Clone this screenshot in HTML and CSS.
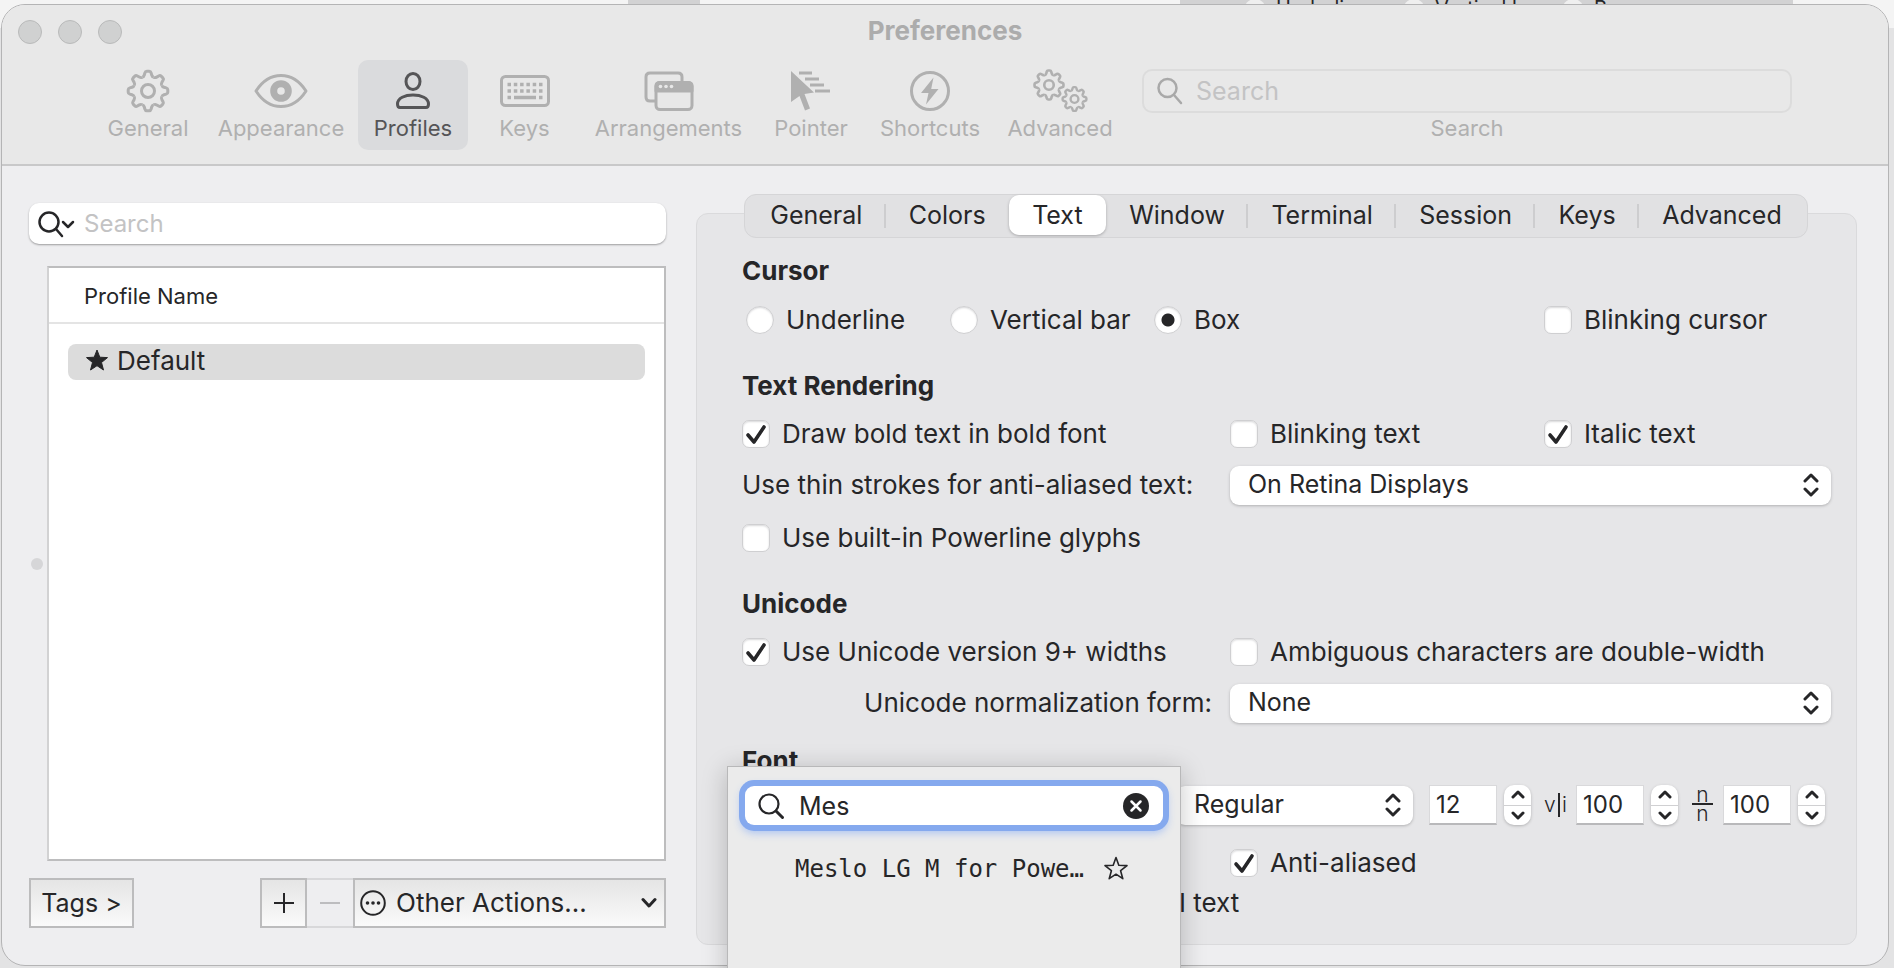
FILE: index.html
```html
<!DOCTYPE html>
<html lang="en">
<head>
<meta charset="utf-8">
<title>Preferences</title>
<link rel="stylesheet" href="styles.css">
</head>
<body>
<svg class="defs" width="0" height="0" aria-hidden="true">
  <defs>
    <path id="tooth" d="M-5.74-13.86Q-4.2-14.2-3.7-16L-3.1-18.2Q-2.7-19.8-1.2-19.8H1.2Q2.7-19.8 3.1-18.2L3.7-16Q4.2-14.2 5.74-13.86"/>
    <g id="gear">
      <use href="#tooth"/><use href="#tooth" transform="rotate(45)"/><use href="#tooth" transform="rotate(90)"/><use href="#tooth" transform="rotate(135)"/>
      <use href="#tooth" transform="rotate(180)"/><use href="#tooth" transform="rotate(225)"/><use href="#tooth" transform="rotate(270)"/><use href="#tooth" transform="rotate(315)"/>
      <circle r="6.5"/>
    </g>
    <g id="updown" fill="none" stroke="#262628" stroke-width="3" stroke-linecap="round" stroke-linejoin="round">
      <path d="M2 8l6-6 6 6M2 16l6 6 6-6"/>
    </g>
  </defs>
</svg>

<div class="behind" aria-hidden="true">
  <div class="behind-a"></div>
  <div class="behind-b"><i></i><span>Underline</span><i></i><span>Vertical bar</span><i></i><span>Box</span></div>
</div>

<main class="window">
  <header class="titlebar">
    <div class="title-row">
      <div class="lights"><button aria-label="Close"></button><button aria-label="Minimize"></button><button aria-label="Zoom"></button></div>
      <h1>Preferences</h1>
    </div>
    <nav class="toolbar">
      <button class="tool"><svg class="line" width="48" height="48" viewBox="-24 -24 48 48"><use href="#gear"/></svg>General</button>
      <button class="tool"><svg class="line" width="56" height="48" viewBox="-28 -24 56 48"><path d="M-25 0Q-15-15.500 0-15.500T25 0Q15 15.500 0 15.500T-25 0Z"/><circle r="7.300" stroke-width="7"/></svg>Appearance</button>
      <button class="tool active"><svg class="line" width="48" height="48" viewBox="-24 -24 48 48"><ellipse cy="-9.500" rx="7" ry="8"/><path d="M-15.500 13C-15.500 7-8 4 0 4S15.500 7 15.500 13Q15.500 16.500 13 16.500H-13Q-15.500 16.500-15.500 13Z"/></svg>Profiles</button>
      <button class="tool"><svg class="line" width="52" height="48" viewBox="-26 -24 52 48"><rect x="-23.500" y="-14.500" width="47" height="29" rx="4"/><path d="M-17.500-6.500H18M-17.500 0H18" stroke-width="3.500" stroke-dasharray="3.500 2.800"/><path d="M-17.500 6.500h3.500M-11 6.500H11M14 6.500h3.500" stroke-width="3.500" stroke-linecap="butt"/></svg>Keys</button>
      <button class="tool"><svg class="line" width="52" height="48" viewBox="-26 -24 52 48"><path d="M-14 10H-19Q-23 10-23 6V-14Q-23-18-19-18H9Q13-18 13-14V-10"/><rect x="-13" y="-8.500" width="36" height="27" rx="4"/><path d="M-13 0V-5Q-13-8.500-9-8.500H19Q23-8.500 23-5V0Z" class="solid"/><g fill="#e8e8e8" stroke="none"><circle cx="-8.500" cy="-4.500" r="1.800"/><circle cx="-3" cy="-4.500" r="1.800"/><circle cx="2.500" cy="-4.500" r="1.800"/></g></svg>Arrangements</button>
      <button class="tool"><svg class="line" width="44" height="48" viewBox="-22 -24 44 48"><path class="fill" d="M-20-20L3 1.500L-6.500 3L-1 17.500L-6 19.500L-11.500 5L-20 11Z"/><path d="M-12-18H1M-6-12H8M-1-6H13M4 0H19"/></svg>Pointer</button>
      <button class="tool"><svg class="line" width="48" height="48" viewBox="-24 -24 48 48"><circle r="18.500"/><path class="fill" d="M3.500-13.500L-9 2H-1.500L-4 13.500L8.500-2H1.200Z"/></svg>Shortcuts</button>
      <button class="tool"><svg class="line" width="56" height="48" viewBox="-28 -24 56 48"><g transform="translate(-11 -6) scale(.73)" stroke-width="3.600"><use href="#gear"/></g><g transform="translate(14.500 8) scale(.6)" stroke-width="4"><use href="#gear"/></g></svg>Advanced</button>
      <label class="tool-search">
        <span class="tool-field"><svg width="28" height="28" viewBox="0 0 28 28" fill="none" stroke="#a9a9a9" stroke-width="2.500" stroke-linecap="round"><circle cx="11.500" cy="11" r="9"/><path d="M18 18l7 8"/></svg><input type="search" placeholder="Search"></span>
        Search
      </label>
    </nav>
  </header>

  <div class="body">
    <section class="sidebar">
      <label class="side-search"><svg width="40" height="28" viewBox="0 0 40 28" fill="none" stroke="#262628" stroke-width="2.500" stroke-linecap="round" stroke-linejoin="round"><circle cx="12" cy="12" r="9.500"/><path d="M19 19l6 7M26 12l5 5 5-5"/></svg><input type="search" placeholder="Search" aria-label="Search profiles"></label>
      <div class="list-row">
        <span class="grip"></span>
        <table class="profiles">
          <thead><tr><th>Profile Name</th></tr></thead>
          <tbody><tr><td><div class="profile"><svg width="24" height="24" viewBox="-12 -12 24 24"><path fill="#262628" stroke="#262628" stroke-linejoin="round" d="M0-11L2.800-3.800L10.500-3.400L4.500 1.500L6.500 9L0 4.700L-6.500 9L-4.500 1.500L-10.500-3.400L-2.800-3.800Z"/></svg>Default</div></td></tr></tbody>
        </table>
      </div>
      <div class="side-actions">
        <button class="bevel tags">Tags &gt;</button>
        <div class="group">
          <button class="bevel plus" aria-label="Add profile"><svg width="22" height="22" viewBox="0 0 22 22"><path d="M11 1v20M1 11h20" stroke="#262628" stroke-width="2"/></svg></button>
          <button class="bevel minus" aria-label="Remove profile" disabled><svg width="22" height="22" viewBox="0 0 22 22"><path d="M1 11h20" stroke="#bdbdbf" stroke-width="2"/></svg></button>
          <button class="bevel other"><svg width="26" height="26" viewBox="-13 -13 26 26"><circle r="11.800" fill="none" stroke="#262628" stroke-width="2"/><g fill="#262628"><circle cx="-5.500" r="1.800"/><circle r="1.800"/><circle cx="5.500" r="1.800"/></g></svg><span>Other Actions...</span><svg width="16" height="12" viewBox="0 0 16 12"><path d="M2 2.500l6 6.500 6-6.500" fill="none" stroke="#262628" stroke-width="3" stroke-linecap="round" stroke-linejoin="round"/></svg></button>
        </div>
      </div>
    </section>

    <section class="panel">
      <nav class="tabs">
        <button class="tab sep">General</button><button class="tab">Colors</button><button class="tab selected">Text</button><button class="tab sep">Window</button><button class="tab sep">Terminal</button><button class="tab sep">Session</button><button class="tab sep">Keys</button><button class="tab">Advanced</button>
      </nav>

      <div class="form">
        <h2>Cursor</h2>
        <div class="row tall">
          <div class="radios">
            <label class="choice"><input type="radio" name="cursor">Underline</label>
            <label class="choice"><input type="radio" name="cursor">Vertical bar</label>
            <label class="choice"><input type="radio" name="cursor" checked>Box</label>
          </div>
          <label class="choice third"><input type="checkbox">Blinking cursor</label>
        </div>

        <h2>Text Rendering</h2>
        <div class="row">
          <label class="choice"><input type="checkbox" checked>Draw bold text in bold font</label>
          <label class="choice"><input type="checkbox">Blinking text</label>
          <label class="choice"><input type="checkbox" checked>Italic text</label>
        </div>
        <div class="row short">
          <label for="thin">Use thin strokes for anti-aliased text:</label>
          <span class="popup wide"><select id="thin"><option>On Retina Displays</option></select><svg width="16" height="24"><use href="#updown"/></svg></span>
        </div>
        <div class="row tall">
          <label class="choice"><input type="checkbox">Use built-in Powerline glyphs</label>
        </div>

        <h2>Unicode</h2>
        <div class="row">
          <label class="choice"><input type="checkbox" checked>Use Unicode version 9+ widths</label>
          <label class="choice wide"><input type="checkbox">Ambiguous characters are double-width</label>
        </div>
        <div class="row short">
          <label for="norm" class="right">Unicode normalization form:</label>
          <span class="popup wide"><select id="norm"><option>None</option></select><svg width="16" height="24"><use href="#updown"/></svg></span>
        </div>

        <div class="font-area">
          <h2>Font</h2>
          <div class="font-row">
            <span class="popup"><select aria-label="Font style"><option>Regular</option></select><svg width="16" height="24"><use href="#updown"/></svg></span>
            <input class="num" type="text" value="12" aria-label="Size">
            <span class="stepper"><button aria-label="Increase size"><svg width="14" height="9"><path d="M2 7l5-5 5 5"/></svg></button><button aria-label="Decrease size"><svg width="14" height="9"><path d="M2 2l5 5 5-5"/></svg></button></span>
            <label class="vi" for="hsp">v<i></i>i</label>
            <input class="num" type="text" value="100" id="hsp">
            <span class="stepper"><button aria-label="Increase horizontal spacing"><svg width="14" height="9"><path d="M2 7l5-5 5 5"/></svg></button><button aria-label="Decrease horizontal spacing"><svg width="14" height="9"><path d="M2 2l5 5 5-5"/></svg></button></span>
            <label class="nn" for="vsp"><span>n</span><span>n</span></label>
            <input class="num" type="text" value="100" id="vsp">
            <span class="stepper"><button aria-label="Increase vertical spacing"><svg width="14" height="9"><path d="M2 7l5-5 5 5"/></svg></button><button aria-label="Decrease vertical spacing"><svg width="14" height="9"><path d="M2 2l5 5 5-5"/></svg></button></span>
          </div>
          <div class="row roomy">
            <label class="choice second"><input type="checkbox" checked>Anti-aliased</label>
          </div>
          <div class="tail">I text</div>

          <div class="popover">
            <label class="pop-field"><svg width="28" height="28" viewBox="0 0 28 28" fill="none" stroke="#262628" stroke-width="2.200" stroke-linecap="round"><circle cx="12" cy="12" r="9.500"/><path d="M19 19l6.500 6.500" stroke-width="3"/></svg><input type="text" value="Mes" aria-label="Search fonts"><button aria-label="Clear"><svg width="26" height="26" viewBox="-13 -13 26 26"><circle r="13" fill="#262628"/><path d="M-4.500-4.500l9 9M4.500-4.500l-9 9" stroke="#fff" stroke-width="2.500" stroke-linecap="round"/></svg></button></label>
            <div class="result"><span>Meslo LG M for Powe…</span><button aria-label="Favorite"><svg width="26" height="26" viewBox="-13 -13 26 26"><path fill="none" stroke="#262628" stroke-width="1.600" stroke-linejoin="round" d="M0-11.500L2.800-3.800L11-3.400L4.600 1.700L6.800 9.700L0 5.200L-6.800 9.700L-4.600 1.700L-11-3.400L-2.800-3.800Z"/></svg></button></div>
          </div>
        </div>
      </div>
    </section>
  </div>
</main>
</body>
</html>
```

FILE: styles.css
```css
* { box-sizing: border-box; }

body {
  position: relative;
  display: flow-root;
  margin: 0;
  height: 100vh;
  overflow: hidden;
  background: #e3e3e4;
  color: #262628;
  font: 26px/30px Inter, "Liberation Sans", sans-serif;
}

button, input, select { font: inherit; color: inherit; margin: 0; }
button { background: none; border: 0; padding: 0; }
h1, h2 { margin: 0; font-size: 26px; font-weight: 700; }
svg { display: block; flex: none; }
.defs { position: absolute; }

/* Slivers of the window underneath */
.behind {
  position: absolute;
  inset: 0 0 auto;
  height: 28px;
  background: #f4f4f4;
  overflow: hidden;
}
.behind-a, .behind-b { position: absolute; top: 0; height: 28px; background: #d2d2d3; }
.behind-a { left: 628px; width: 72px; }
.behind-b {
  left: 1180px;
  width: 613px;
  padding-left: 64px;
  display: flex;
  gap: 10px;
  font-size: 20px;
  line-height: 16px;
}
.behind-b i { width: 22px; height: 22px; border-radius: 50%; background: #efefef; margin-top: -1px; }
.behind-b span { width: 117px; white-space: nowrap; }

.window {
  position: relative;
  display: flex;
  flex-direction: column;
  height: calc(100vh - 6px);
  margin: 4px 5px 2px 1px;
  background: #eeeef0;
  border: 1px solid #b4b4b5;
  border-radius: 24px;
}

.titlebar {
  background: #e8e8e8;
  border-bottom: 2px solid #c8c8c9;
  border-radius: 23px 23px 0 0;
  height: 161px;
  flex: none;
  color: #b0b0b0;
}
.title-row {
  display: grid;
  grid-template-columns: 1fr auto 1fr;
  align-items: center;
  height: 54px;
  padding: 0 16px;
}
.title-row h1 { color: #acacac; padding-bottom: 2px; }
.lights { display: flex; gap: 16px; }
.lights button { width: 24px; height: 24px; border-radius: 50%; background: #d0d1d1; border: 1px solid #b9baba; }

.toolbar {
  display: grid;
  grid-template-columns: 112px 154px 110px 113px 175px 110px 128px 132px 1fr;
  padding: 1px 96px 0 90px;
  font-size: 22px;
  line-height: 26px;
}
.tool {
  display: flex;
  flex-direction: column;
  align-items: center;
  height: 90px;
  padding-top: 7px;
  border-radius: 10px;
}
.tool.active { background: #dadbdd; color: #555557; }
.line { fill: none; stroke: currentColor; stroke-width: 3; stroke-linejoin: round; }
.line .fill { fill: currentColor; stroke: none; }
.line .solid { fill: currentColor; }
.tool-search { display: flex; flex-direction: column; align-items: center; padding: 9px 0 0 16px; }
.tool-field {
  display: flex;
  align-items: center;
  gap: 12px;
  width: 100%;
  height: 44px;
  margin-bottom: 2px;
  padding: 0 12px;
  border: 2px solid #dcdcdc;
  border-radius: 10px;
}
input[type=search], .pop-field input {
  flex: 1;
  min-width: 0;
  border: 0;
  outline: 0;
  padding: 0;
  background: none;
  appearance: none;
}
.tool-field input, .pop-field input { font-size: 25px; }
input::placeholder { color: #c3c3c4; opacity: 1; }

.body { flex: 1; display: flex; gap: 30px; padding: 27px 31px 20px 27px; min-height: 0; }

.sidebar { flex: 0 0 637px; display: flex; flex-direction: column; padding-top: 10px; }
.side-search {
  display: flex;
  align-items: center;
  gap: 7px;
  height: 41px;
  padding: 0 8px;
  border-radius: 10px;
  background: #fff;
  box-shadow: 0 1px 2px #9c9c9e;
}
.side-search input { font-size: 24px; }
.list-row { flex: 1; display: flex; align-items: center; gap: 4px; margin-top: 22px; padding-left: 2px; min-height: 0; }
.grip { width: 12px; height: 12px; border-radius: 50%; background: #d6d6d8; }
.profiles { flex: 1; align-self: stretch; display: block; background: #fff; border: 2px solid #bdbdbe; border-left-color: #d2d2d3; border-spacing: 0; }
.profiles thead, .profiles tbody, .profiles tr, .profiles th, .profiles td { display: block; padding: 0; }
.profiles th {
  height: 56px;
  padding: 0 35px;
  border-bottom: 2px solid #e4e4e4;
  font-size: 22px;
  line-height: 56px;
  font-weight: 400;
  text-align: left;
}
.profiles td { padding: 20px 19px; }
.profile { display: flex; align-items: center; gap: 8px; height: 36px; padding: 0 17px 2px; border-radius: 8px; background: #dcdcdc; }

.side-actions { display: flex; justify-content: space-between; margin: 17px 0; }
.group { display: flex; }
.bevel {
  display: flex;
  align-items: center;
  justify-content: center;
  height: 50px;
  border: 2px solid #bcbcbd;
  background: linear-gradient(#e5e5e5, #fafafa);
  font-size: 26px;
}
.tags { width: 105px; font-size: 25px; }
.plus { width: 47px; }
.minus { width: 46px; background: #eeeef0; border-color: #d8d8da; border-width: 2px 0; }
.other { width: 313px; gap: 10px; padding: 0 7px 0 5px; }
.other span { flex: 1; text-align: left; }

.panel {
  flex: 1;
  min-width: 0;
  margin-top: 20px;
  background: #e6e6e8;
  border: 1px solid #dadadc;
  border-radius: 12px;
}
.tabs {
  display: flex;
  justify-content: space-between;
  height: 44px;
  margin: -20px 48px 0 47px;
  padding: 0 2px 2px;
  border: 1px solid #d5d5d7;
  border-radius: 12px;
  background: #e1e1e3;
  font-size: 25px;
}
.tab { position: relative; flex: 1 1 auto; padding: 0 8px; border-radius: 10px; }
.tab.selected { background: #fff; box-shadow: 0 1px 3px #a6a6a8; }
.tab.sep::after { content: ""; position: absolute; right: 0; top: 9px; width: 2px; height: 24px; background: #cdcdcf; }

.form { padding: 13px 25px 0 45px; white-space: nowrap; }
.form h2 { height: 40px; line-height: 40px; }
.row { display: grid; grid-template-columns: 488px 314px 1fr; align-items: center; height: 55px; }
.row.tall { height: 58px; }
.row.short { height: 48px; }
.row.roomy { height: 68px; }
.row + h2 { margin-top: 17px; }
.wide { grid-column: 2 / 4; }
.second { grid-column: 2; }
.third { grid-column: 3; }
.right { justify-self: end; margin-right: 18px; }
.radios { grid-column: 1 / 3; display: grid; grid-template-columns: 204px 204px 1fr; padding-left: 4px; }
.choice { display: flex; align-items: center; gap: 12px; }
.choice input {
  appearance: none;
  flex: none;
  width: 28px;
  height: 28px;
  background: #fff center / 28px no-repeat;
  border: 1px solid #cfcfd1;
  border-radius: 7px;
  box-shadow: inset 0 1px 2px #d8d8da;
}
.choice input[type=radio] { border-radius: 50%; }
.choice input[type=radio]:checked { background-image: radial-gradient(circle, #262628 6px, transparent 7px); }
.choice input[type=checkbox]:checked {
  background-image: url("data:image/svg+xml,%3Csvg xmlns='http://www.w3.org/2000/svg' viewBox='0 0 28 28'%3E%3Cpath d='M6 15l6 7L22 7' fill='none' stroke='%23262628' stroke-width='3.600' stroke-linecap='round' stroke-linejoin='round'/%3E%3C/svg%3E");
}

.popup { display: grid; align-items: center; height: 39px; border-radius: 9px; background: #fff; box-shadow: 0 1px 3px #b0b0b2; }
.popup select, .popup svg { grid-area: 1 / 1; }
.popup select { appearance: none; width: 100%; height: 39px; padding: 0 40px 2px 18px; border: 0; background: none; outline: 0; font-size: 25px; }
.popup svg { justify-self: end; margin-right: 12px; pointer-events: none; }

.font-area { position: relative; margin-top: 14px; }
.font-row { display: flex; align-items: center; height: 48px; margin-right: 6px; padding-left: 434px; }
.font-row .popup { flex: 1; margin-right: 16px; }
.num {
  width: 68px;
  height: 40px;
  padding: 0 6px;
  border: 1px solid #d9d9db;
  border-bottom: 2px solid #b9b9bb;
  background: #fff;
  font-size: 24px;
  outline: 0;
}
.stepper { display: flex; flex-direction: column; width: 27px; height: 40px; margin-left: 7px; border-radius: 10px; background: #fff; box-shadow: 0 1px 3px #b0b0b2; }
.stepper button { flex: 1; display: flex; align-items: center; justify-content: center; }
.stepper button + button { border-top: 1px solid #d0d0d2; }
.stepper path { fill: none; stroke: #262628; stroke-width: 3; stroke-linecap: round; stroke-linejoin: round; }
.vi, .nn { width: 45px; font-size: 21px; font-weight: 300; }
.vi { display: flex; align-items: center; justify-content: space-between; padding: 0 9px 0 13px; }
.vi i { width: 2px; height: 24px; background: #262628; }
.nn { display: flex; flex-direction: column; padding: 0 10px 2px 14px; text-align: center; line-height: 17px; }
.nn span + span { border-top: 2px solid #262628; }
.tail { height: 28px; line-height: 28px; margin-top: -8px; padding-left: 437px; }

.popover {
  position: absolute;
  left: -15px;
  top: 25px;
  width: 454px;
  height: 230px;
  padding: 19px 17px;
  background: #ebebeb;
  border: 1px solid #b8b8b9;
  box-shadow: 0 4px 24px rgba(0, 0, 0, .22);
}
.pop-field {
  display: flex;
  align-items: center;
  gap: 14px;
  height: 39px;
  padding: 0 14px 0 12px;
  border-radius: 9px;
  background: #fff;
  box-shadow: 0 0 0 6px #85a9ee, 0 4px 8px 4px #a9c2f2;
}
.result { display: flex; align-items: center; gap: 19px; margin-top: 28px; padding-left: 50px; font: 24px/32px "DejaVu Sans Mono", monospace; }
```
